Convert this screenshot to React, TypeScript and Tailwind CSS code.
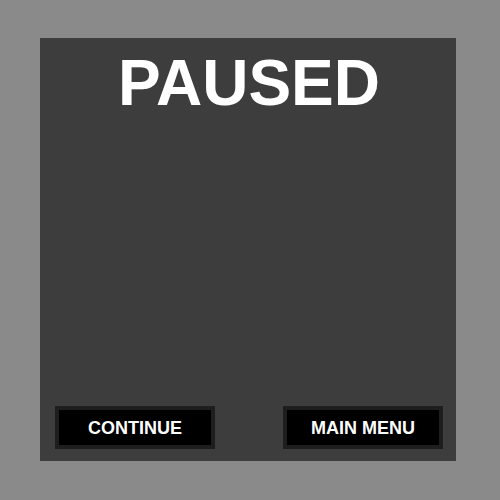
import React from "react";

const MenuButton = ({ label }: { label: string }) => (
  <button className="w-[160px] h-[43px] bg-black border-4 border-[#1e1e1e] flex items-center justify-center text-white font-bold text-[18px] leading-none">
    {label}
  </button>
);

const App = () => {
  return (
    <div
      className="w-[500px] h-[500px] bg-[#8a8a8a] pt-[38px] pl-[40px]"
      style={{ fontFamily: '"Liberation Sans", Arial, sans-serif' }}
    >
      {/* Pause panel */}
      <div className="w-[416px] h-[423px] bg-[#3d3d3d] flex flex-col justify-between pt-[13px] pb-[12px] pl-[15px] pr-[13px]">
        <h1 className="text-white font-bold text-[64px] leading-none text-center">PAUSED</h1>
        <div className="flex justify-between">
          <MenuButton label="CONTINUE" />
          <MenuButton label="MAIN MENU" />
        </div>
      </div>
    </div>
  );
};

export default App;
